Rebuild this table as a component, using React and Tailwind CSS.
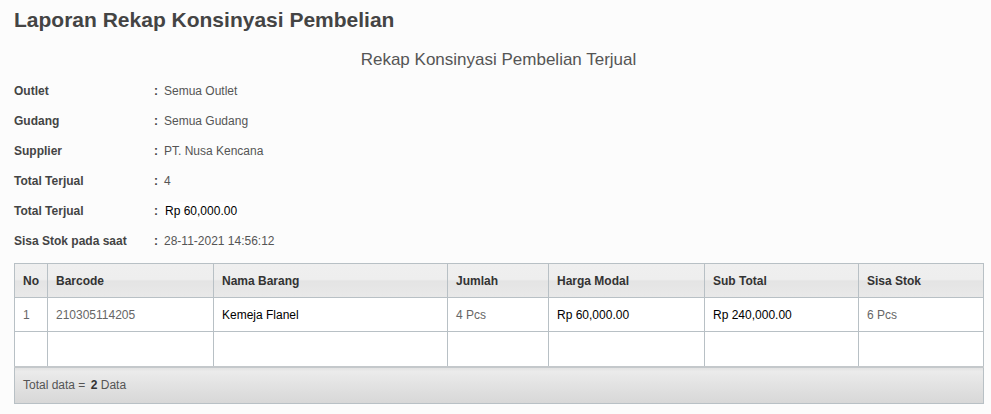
import React from 'react'

const info = [
  { label: 'Outlet', value: 'Semua Outlet' },
  { label: 'Gudang', value: 'Semua Gudang' },
  { label: 'Supplier', value: 'PT. Nusa Kencana' },
  { label: 'Total Terjual', value: '4' },
  { label: 'Total Terjual', value: 'Rp 60,000.00', pasted: true },
  { label: 'Sisa Stok pada saat', value: '28-11-2021 14:56:12' },
]

const cols = [
  { name: 'No', w: 'w-[33px]' },
  { name: 'Barcode', w: 'w-[166px]' },
  { name: 'Nama Barang', w: 'w-[234px]' },
  { name: 'Jumlah', w: 'w-[101px]' },
  { name: 'Harga Modal', w: 'w-[156px]' },
  { name: 'Sub Total', w: 'w-[154px]' },
  { name: 'Sisa Stok', w: 'w-[125px]' },
]

export default function App() {
  return (
    <div className="w-[991px] h-[414px] bg-[#fcfcfc] font-['Liberation_Sans',Arial,sans-serif] text-[#444] overflow-hidden">
      {/* Title */}
      <h1 className="pl-[14px] pt-[8px] text-[21px] leading-[24px] font-bold text-[#444]">
        Laporan Rekap Konsinyasi Pembelian
      </h1>
      <h2 className="mt-[18px] pl-[6px] text-center text-[17px] leading-[20px] text-[#555]">
        Rekap Konsinyasi Pembelian Terjual
      </h2>

      {/* Info */}
      <div className="mt-[6px] pl-[14px]">
        {info.map((row, i) => (
          <div key={i} className="flex items-center h-[30px] text-[12px]">
            <div className="w-[140px] font-bold text-[#444]">{row.label}</div>
            <div className="w-[10px] font-bold text-[#444]">:</div>
            {row.pasted ? (
              <span className="bg-white text-black px-[1px]">{row.value}</span>
            ) : (
              <span className="text-[#555]">{row.value}</span>
            )}
          </div>
        ))}
      </div>

      {/* Table */}
      <div className="mt-[7px] pl-[14px]">
        <table className="w-[969px] border-collapse text-[12px] table-fixed">
          <thead>
            <tr className="h-[34px] bg-[linear-gradient(to_bottom,#efefef_0%,#eeeeee_45%,#e4e4e4_50%,#e9e9e9_100%)]">
              {cols.map(c => (
                <th key={c.name} className={`${c.w} border border-[#b8c0c5] text-left font-bold text-[#333] px-[8px]`}>
                  {c.name}
                </th>
              ))}
            </tr>
          </thead>
          <tbody className="bg-white">
            <tr className="h-[34px]">
              <td className="border border-[#b8c0c5] px-[8px] text-[#666]">1</td>
              <td className="border border-[#b8c0c5] px-[8px] text-[#666]">210305114205</td>
              <td className="border border-[#b8c0c5] px-[8px] text-black">Kemeja Flanel</td>
              <td className="border border-[#b8c0c5] px-[8px] text-[#666]">4 Pcs</td>
              <td className="border border-[#b8c0c5] px-[8px] text-black">Rp 60,000.00</td>
              <td className="border border-[#b8c0c5] px-[8px] text-black">Rp 240,000.00</td>
              <td className="border border-[#b8c0c5] px-[8px] text-[#666]">6 Pcs</td>
            </tr>
            <tr className="h-[35px]">
              {cols.map(c => (
                <td key={c.name} className="border border-[#b8c0c5] px-[8px]"></td>
              ))}
            </tr>
          </tbody>
          <tfoot>
            <tr className="h-[37px] bg-[linear-gradient(to_bottom,#e0e0e0_0%,#ebebeb_12%,#e2e2e2_50%,#d7d7d7_100%)]">
              <td colSpan={7} className="border border-[#b8c0c5] border-t-[2px] border-t-[#c4c8cb] px-[8px] text-[#555]">
                Total data = <span className="ml-[2px] font-bold text-[#333]">2</span> Data
              </td>
            </tr>
          </tfoot>
        </table>
      </div>
    </div>
  )
}
